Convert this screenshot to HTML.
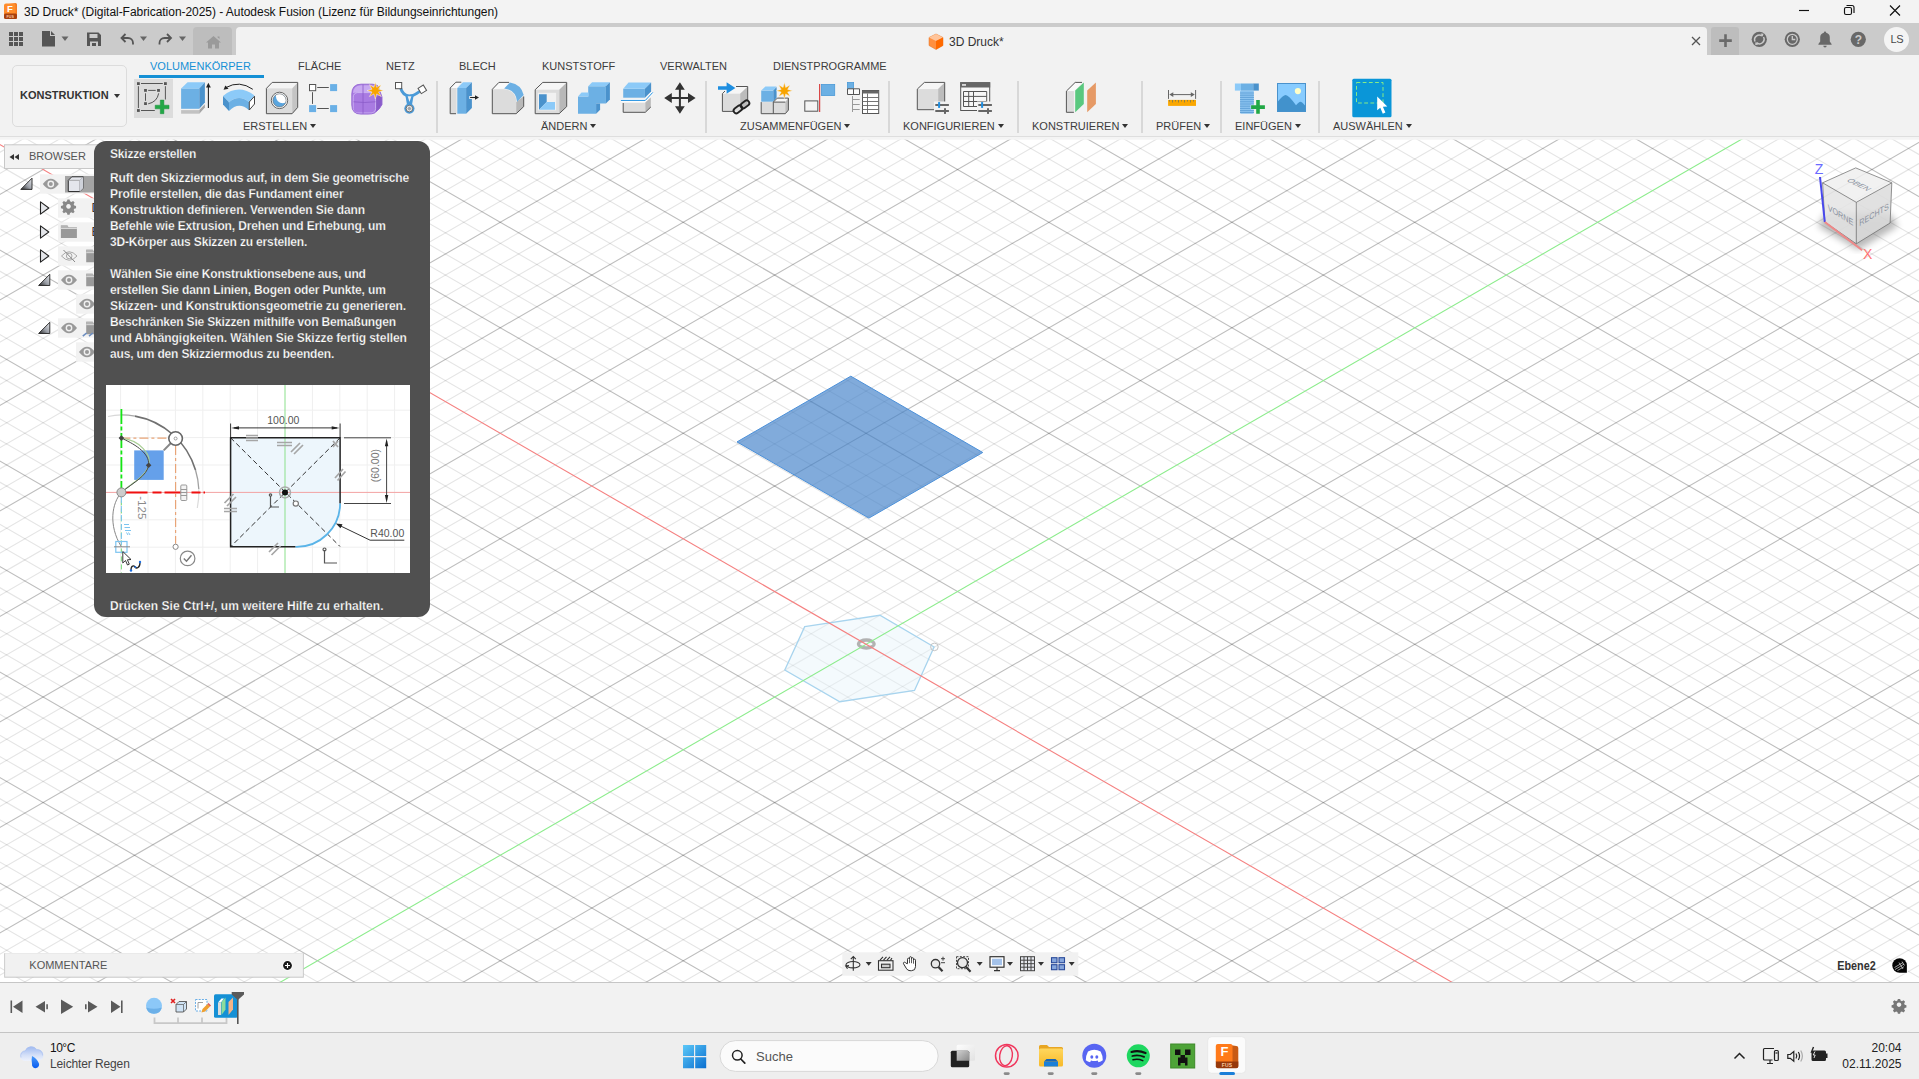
<!DOCTYPE html>
<html lang="de"><head><meta charset="utf-8"><title>3D Druck* - Autodesk Fusion</title>
<style>
*{box-sizing:border-box;margin:0;padding:0}
html,body{width:1919px;height:1079px;overflow:hidden;background:#f0f0f0;font-family:"Liberation Sans",sans-serif;color:#333}
.abs{position:absolute}
#titlebar{position:absolute;left:0;top:0;width:1919px;height:24px;background:#f3f3f3}
#titlebar .t{position:absolute;left:24px;top:5px;font-size:12px;line-height:14px;color:#111;letter-spacing:-0.04px;white-space:nowrap}
#tabrow{position:absolute;left:0;top:23px;width:1919px;height:32px;background:#cbcbcb}
#toolbar{position:absolute;left:0;top:55px;width:1919px;height:82px;background:#f2f2f2;border-bottom:1px solid #dedede}
#viewport{position:absolute;left:0;top:137px;width:1919px;height:845px;background:#fff;overflow:hidden}
#timeline{position:absolute;left:0;top:982px;width:1919px;height:50px;background:#f2f2f2;border-top:1px solid #c6c6c6}
#taskbar{position:absolute;left:0;top:1032px;width:1919px;height:47px;background:#eeeeee;border-top:1px solid #c4c4c4}
.tab{position:absolute;top:60px;font-size:11px;line-height:12px;color:#3c3c3c;white-space:nowrap}
.grp{position:absolute;top:120px;font-size:11px;line-height:12px;color:#3c3c3c;white-space:nowrap}
.grp i{display:inline-block;width:0;height:0;border-left:3px solid transparent;border-right:3px solid transparent;border-top:4px solid #333;margin-left:3px;vertical-align:2px}
.sep{position:absolute;top:81px;width:2px;height:52px;background:#d8d8d8}
.ic{position:absolute;overflow:visible}
.tt{position:absolute;left:110px;font-size:12px;font-weight:bold;line-height:16px;color:#fff;letter-spacing:-0.12px;white-space:nowrap;-webkit-text-stroke:0.25px #505050}
</style></head><body>
<div id="titlebar">
<svg class="ic" style="left:3px;top:2px" width="16" height="18" viewBox="0 0 16 18"><path d="M2.500 2.500l10-1.500a1.500 1.500 0 0 1 1.500 1.500v13a1.500 1.500 0 0 1-1.500 1.500h-8.500a2 2 0 0 1-2-2z" fill="#f47b20"/><path d="M1 3.500a2 2 0 0 1 2-2h7.500a2 2 0 0 1 2 2v11.500h-11.500z" fill="#ff8c2a"/><rect x="1" y="11.500" width="13" height="5.500" rx="1.500" fill="#a8400e"/><text x="4" y="9.800" font-family="Liberation Sans,sans-serif" font-weight="bold" font-size="9.500" fill="#fff">F</text><text x="3.600" y="15.700" font-family="Liberation Sans,sans-serif" font-weight="bold" font-size="3.600" fill="#f9c9a0">FUS</text></svg>
<div class="t">3D Druck* (Digital-Fabrication-2025) - Autodesk Fusion (Lizenz für Bildungseinrichtungen)</div>
<svg class="ic" style="left:1780px;top:0" width="139" height="24" viewBox="0 0 139 24" fill="none" stroke="#111" stroke-width="1.150"><path d="M19 10.500h10"/><rect x="64.500" y="7.500" width="7" height="7" rx="1.500"/><path d="M66.500 5.500h5.500a2 2 0 0 1 2 2v5.500"/><path d="M110 5.500l10 10M120 5.500l-10 10"/></svg>
</div>
<div id="tabrow">
<div class="abs" style="left:193px;top:4px;width:39px;height:28px;background:#bdbdbd;border-radius:4px 4px 0 0"></div>
<div class="abs" style="left:236px;top:4px;width:1471px;height:28px;background:#f2f2f2;border-radius:4px 4px 0 0"></div>
<div class="abs" style="left:1711px;top:4px;width:28px;height:28px;background:#bdbdbd;border-radius:3px 3px 0 0"></div>
<svg class="ic" style="left:0;top:0" width="240" height="32" viewBox="0 23 240 32">
 <g fill="#555"><rect x="9" y="32" width="4" height="4"/><rect x="14" y="32" width="4" height="4"/><rect x="19" y="32" width="4" height="4"/><rect x="9" y="37" width="4" height="4"/><rect x="14" y="37" width="4" height="4"/><rect x="19" y="37" width="4" height="4"/><rect x="9" y="42" width="4" height="4"/><rect x="14" y="42" width="4" height="4"/><rect x="19" y="42" width="4" height="4"/>
 <path d="M42 31h8v5h5v10.500h-13z"/><path d="M51 31l4 4h-4z"/>
 <path d="M61.500 36.500h7l-3.500 4.500z" fill="#666"/>
 <path d="M87 32.500h11.500l2.500 2.500v11h-14z M89.500 34v4h8v-4z M90 41.500v4.500h2v-3h4v3h2v-4.500z" fill-rule="evenodd"/>
 <path d="M140 36.500h7l-3.500 4.500z" fill="#666"/>
 <path d="M179 36.500h7l-3.500 4.500z" fill="#666"/>
 </g>
 <path d="M125.500 34l-4 4 4 4M121.500 38h6.500a5 5 0 0 1 5 5v1.500" fill="none" stroke="#555" stroke-width="1.800"/>
 <path d="M167 34l4 4-4 4M171 38h-6.500a5 5 0 0 0-5 5v1.500" fill="none" stroke="#555" stroke-width="1.800"/>
 <path d="M213.500 36l7.500 6.500h-2v6h-4v-4h-3v4h-4v-6h-2z M217.500 36.500h2v2.500l-2-1.700z" fill="#9a9a9a"/>
</svg>
<svg class="ic" style="left:927px;top:10px" width="18" height="18" viewBox="0 0 18 18"><path d="M9 1l7 3.500v8l-7 4-7-4v-8z" fill="#ff9040" stroke="#e07020" stroke-width=".5"/><path d="M9 1l7 3.500-7 3.500-7-3.500z" fill="#ffc49a"/><path d="M9 8l7-3.500v8l-7 4z" fill="#ff6a00"/></svg>
<div class="abs" style="left:949px;top:12px;font-size:12px;line-height:14px;color:#333;white-space:nowrap">3D Druck*</div>
<svg class="ic" style="left:1690px;top:0" width="229" height="32" viewBox="1690 23 229 32">
 <path d="M1692 37l8 8M1700 37l-8 8" stroke="#555" stroke-width="1.300" fill="none"/>
 <path d="M1725.500 34.300v12.600M1719.200 40.600h12.600" stroke="#6a6a6a" stroke-width="2.600" fill="none"/>
 <circle cx="1759.300" cy="39.300" r="7.600" fill="#686868"/><path d="M1755 41.500a4.600 4.600 0 0 1 7-5.500M1763.500 37a4.600 4.600 0 0 1-7 5.700" stroke="#cbcbcb" stroke-width="1.500" fill="none"/><path d="M1760.500 33.500l3 .3-.8 3zM1758 45l-3-.3.800-3z" fill="#cbcbcb"/>
 <circle cx="1792.300" cy="39.300" r="7.600" fill="#686868"/><circle cx="1792.300" cy="39.300" r="5" fill="none" stroke="#cbcbcb" stroke-width="1.300"/><path d="M1792.300 36v3.500h3" stroke="#cbcbcb" stroke-width="1.300" fill="none"/>
 <path d="M1825 31.500a1.200 1.200 0 0 1 1.200 1.200a4.800 4.800 0 0 1 3.600 4.800v4l1.800 2.500v.8h-13.200v-.8l1.800-2.500v-4a4.800 4.800 0 0 1 3.600-4.800a1.200 1.200 0 0 1 1.200-1.200z M1823.300 45.800h3.400a1.700 1.700 0 0 1-3.400 0z" fill="#686868"/>
 <circle cx="1858.300" cy="39.300" r="7.600" fill="#686868"/><text x="1858.300" y="43.700" text-anchor="middle" font-family="Liberation Sans,sans-serif" font-weight="bold" font-size="12" fill="#cbcbcb">?</text>
</svg>
<div class="abs" style="left:1884.400px;top:3.500px;width:25px;height:25px;border-radius:50%;background:#f4f4f4;font-size:11px;line-height:25px;text-align:center;color:#4a4a4a;letter-spacing:-0.3px">LS</div>
</div>
<div id="toolbar"></div>
<div class="abs" style="left:11.500px;top:65px;width:115.500px;height:62px;border:1.500px solid #dcdcdc;border-radius:5px;background:#f3f3f3"></div>
<div class="abs" style="left:20px;top:89px;font-size:11px;font-weight:bold;line-height:12px;color:#333;white-space:nowrap">KONSTRUKTION</div>
<div class="abs" style="left:114px;top:94px;width:0;height:0;border-left:3px solid transparent;border-right:3px solid transparent;border-top:4px solid #333"></div>
<div class="tab" style="left:150px;color:#1590d5">VOLUMENKÖRPER</div>
<div class="abs" style="left:139px;top:75px;width:125px;height:3px;background:#1590d5"></div>
<div class="tab" style="left:298px">FLÄCHE</div>
<div class="tab" style="left:386px">NETZ</div>
<div class="tab" style="left:459px">BLECH</div>
<div class="tab" style="left:542px">KUNSTSTOFF</div>
<div class="tab" style="left:660px">VERWALTEN</div>
<div class="tab" style="left:773px">DIENSTPROGRAMME</div>
<div class="abs" style="left:133.500px;top:79px;width:39px;height:38.500px;background:#dcdcdc"></div>
<svg class="ic" style="left:0;top:55px" width="1919" height="82" viewBox="0 55 1919 82"><!-- sketch -->
<g fill="#555"><rect x="137" y="82.200" width="2.800" height="2.800"/><rect x="164" y="82.200" width="2.800" height="2.800"/><rect x="137" y="109.100" width="2.800" height="2.800"/><rect x="144.100" y="89" width="2.800" height="2.800"/><rect x="157.100" y="89" width="2.800" height="2.800"/><rect x="144.100" y="102.200" width="2.800" height="2.800"/></g>
<path d="M141 83.500H162.800M138.400 86.200V108M165.400 86.200V99.500M141 110.500H154.800M148.200 90.400H155.700M145.500 93.300V100.800M158.700 93.300A13.200 13.200 0 0 1 148.200 103.800" fill="none" stroke="#555" stroke-width="1"/>
<path d="M160.300 100.100h3.600v5.100h5.100v3.600h-5.100v4.900h-3.600v-4.900h-5.100v-3.600h5.100z" fill="#22a846" stroke="#1d8f3c" stroke-width=".5"/>
<!-- extrude -->
<path d="M181.100 88.400H199.300V108.800H181.100z" fill="#6cb0e4"/><path d="M181.100 88.400L187.600 82.200H204.900L199.300 88.400z" fill="#8ccaf8"/><path d="M199.300 88.400L204.900 82.200V102.600L199.300 108.800z" fill="#4a92cc"/>
<path d="M181.100 110.100H199.300V113.700H181.100z" fill="#c2c2c2"/><path d="M199.300 110.100L204.900 104.300V107.400L199.300 113.700z" fill="#a6a6a6"/>
<path d="M208.400 86V107.900" stroke="#222" stroke-width="1.100" fill="none"/><path d="M208.400 82.800L210.800 87.400H206z" fill="#222"/>
<!-- revolve -->
<path d="M223 96Q238.500 83.500 254.500 95.500L249 102Q239 94 229 102.200z" fill="#8ccaf8"/>
<path d="M229 102.200Q239 94 249 102V110.300Q239 101 229 111z" fill="#6cb0e4"/>
<path d="M223 96L229 102.200V111L223 104.500z" fill="#4a92cc"/>
<path d="M249.300 102L254.500 96.200V104L249.300 110z" fill="#fff" stroke="#444" stroke-width="1"/>
<path d="M252.800 89.300Q239.500 80 226 87.500" fill="none" stroke="#222" stroke-width="1"/><path d="M223.600 89.800L225.300 85.500L228.600 88.800z" fill="#222"/>
<!-- hole -->
<path d="M266.400 88.400L272.200 82.400H297.700L292.100 88.400z" fill="#f4f4f4"/><path d="M292.100 88.400L297.700 82.400V107.400L292.100 113.700z" fill="#c4c4c4"/><path d="M266.400 88.400H292.100V113.700H266.400z" fill="#dcdcdc"/>
<path d="M266.400 88.400L272.200 82.400H297.700V107.400L292.100 113.700H266.400z" fill="none" stroke="#555" stroke-width="1"/>
<circle cx="279.500" cy="100.400" r="8.200" fill="#fff" stroke="#555" stroke-width=".9"/>
<clipPath id="hc"><circle cx="279.500" cy="100.400" r="6.600"/></clipPath><circle cx="279.500" cy="100.400" r="6.600" fill="#5aa5de"/><circle cx="282.800" cy="96.300" r="6.900" fill="#fff" clip-path="url(#hc)"/><circle cx="279.500" cy="100.400" r="6.600" fill="none" stroke="#666" stroke-width=".6"/>
<!-- rect pattern -->
<rect x="309.500" y="84.500" width="6.200" height="6.200" fill="#fff" stroke="#555"/>
<rect x="330.100" y="84.100" width="7" height="7" fill="#6ab0e6"/><rect x="309.100" y="105.100" width="7" height="7" fill="#6ab0e6"/><rect x="330.100" y="105.100" width="7" height="7" fill="#6ab0e6"/>
<path d="M317.200 87.500H328.800M312.500 92.200V103.900M317.200 108.500H328.800" stroke="#555" stroke-width="1" fill="none"/>
<!-- form -->
<path d="M351.800 94Q351.800 84.200 361 84.200H372Q376 84.200 378 86L382 97V104.500Q380 109 374.500 113Q372 114.100 368 114.100H361Q351.800 114.100 351.800 105z" fill="#a97be2"/>
<path d="M353 93Q353.500 85.500 361 85.300H372Q375.500 85.500 377 87.500L380 95.500Q377 92.400 372 92.400H357Q354 92.400 353 93z" fill="#c8a9f1"/>
<path d="M375.800 97Q380 95 382 97.500V104.500Q380 109 375.800 112z" fill="#8a5cc9"/>
<rect x="353.200" y="92.600" width="22.400" height="20.400" rx="4.500" fill="none" stroke="#cdb6f3" stroke-width=".9"/>
<path d="M351.800 94Q351.800 84.200 361 84.200H372Q376 84.200 378 86L382 97V104.500Q380 109 374.500 113Q372 114.100 368 114.100H361Q351.800 114.100 351.800 105z" fill="none" stroke="#9466d2" stroke-width=".9"/>
<path d="M363 84.500V113.800M353.500 101.800Q364 103.200 375.500 101.800M379 96V108" fill="none" stroke="#8a5cc9" stroke-width=".8"/>
<path d="M375.300 82.300l1.400 5 4.500-2.600-2.600 4.500 5 1.400-5 1.400 2.600 4.500-4.500-2.600-1.400 5-1.400-5-4.500 2.600 2.600-4.500-5-1.400 5-1.400-2.600-4.500 4.500 2.600z" fill="#f8a400" stroke="#f4f4f4" stroke-width=".5"/>
<!-- automated -->
<g fill="none" stroke="#4a9ad8" stroke-width="2.800" stroke-linecap="round"><path d="M400.800 88.500Q402.500 94.500 408.500 96"/><path d="M419 91.800Q414 95.500 410.500 96"/></g>
<path d="M405.200 94.500H413.800L411.800 106H407.200z" fill="#4a9ad8"/>
<path d="M407.700 96.300H411.400L409.500 102z" fill="#f1f1f1"/>
<circle cx="409.400" cy="108.600" r="5.100" fill="#4a9ad8"/><circle cx="409.400" cy="108.600" r="3.300" fill="#f1f1f1" stroke="#666" stroke-width=".9"/><circle cx="409.400" cy="108.600" r="1.300" fill="none" stroke="#777" stroke-width=".6"/><path d="M409.400 106.800v3.600M407.600 108.600h3.600" stroke="#888" stroke-width=".5"/>
<rect x="395.500" y="82.500" width="6.200" height="6.200" fill="#fff" stroke="#555"/>
<rect x="419.200" y="86.200" width="6.200" height="6.200" fill="#fff" stroke="#555" transform="rotate(-32 422.300 89.300)"/>
<!-- presspull -->
<path d="M450.200 88L455.900 82.200H461.300L457 88z" fill="#fafafa"/><path d="M450.200 88H456.500V113.700H450.200z" fill="#dcdcdc"/>
<path d="M456 113.700H450.200V88L455.900 82.200H461.300" fill="none" stroke="#555" stroke-width="1"/>
<path d="M457.300 88H466.100V113.700H457.300z" fill="#6cb0e4"/><path d="M457.300 88L463 82.200H471.900L466.100 88z" fill="#8ccaf8"/><path d="M466.100 88L471.900 82.200V107.900L466.100 113.700z" fill="#4a92cc"/>
<rect x="469.300" y="96" width="6" height="3" fill="#f4f4f4"/><path d="M470.100 97.500H476" stroke="#222" stroke-width="1.100"/><path d="M479 97.500L475 95.200V99.800z" fill="#222"/>
<!-- fillet -->
<path d="M492.300 89.300L498.900 82.400H509.100L504.200 88.400z" fill="#fafafa"/>
<path d="M492.300 89.300H504Q516.200 90.500 516.200 102.100V113.700H492.300z" fill="#dcdcdc"/>
<path d="M516.200 102.100L523.700 96.200V106.600L516.200 113.700z" fill="#b8b8b8"/>
<path d="M504.200 88.400L510 82.400Q521.500 84.500 523.700 95L517.100 101.700Q516 90 504.200 88.400z" fill="#6cb0e4"/>
<path d="M509.100 82.400H498.900L492.300 89.300V113.700H516.200L523.700 106.600V96.500" fill="none" stroke="#555" stroke-width="1"/>
<!-- shell -->
<path d="M535.200 89.700L542.800 82.400H566.700L559.200 89.700z" fill="#f6f6f6"/><path d="M559.200 89.700L566.700 82.400V106.600L559.200 113.700z" fill="#b8b8b8"/><path d="M535.200 89.700H559.200V113.700H535.200z" fill="#dcdcdc"/>
<path d="M535.200 89.700L542.800 82.400H566.700V106.600L559.200 113.700H535.200z" fill="none" stroke="#555" stroke-width="1"/>
<rect x="537.900" y="92.800" width="18.200" height="17.600" fill="#f1f1f1"/>
<path d="M539 94.200H546.700V102.100L539 109.700z" fill="#4a92cc"/><path d="M546.700 102.100H555V109.700H539z" fill="#8ccaf8"/>
<!-- combine -->
<path d="M578 96.400H588.200V86.200H605.900V103.500H596.100V113.700H578z" fill="#6cb0e4"/>
<path d="M578 96.400L581.500 92.400H588.600V96.400z" fill="#8ccaf8"/><path d="M588.200 86.200L592.100 82.200H609.900L605.900 86.200z" fill="#8ccaf8"/>
<path d="M605.900 86.200L609.900 82.200V99.500L605.900 103.500z" fill="#4a92cc"/><path d="M596.100 103.500H600.100V109.700L596.100 113.700z" fill="#4a92cc"/>
<!-- split -->
<path d="M623.200 88.800H644.900V97.700H623.200z" fill="#6cb0e4"/><path d="M623.200 88.800L628.500 82.400H651.100L644.900 88.800z" fill="#8ccaf8"/><path d="M644.900 88.800L651.100 82.400V91.500L644.900 97.700z" fill="#4a92cc"/>
<path d="M620.900 100.400H645.300L652.800 92.400" fill="none" stroke="#fff" stroke-width="2.600"/><path d="M620.900 100.400H645.300L652.800 92.400" fill="none" stroke="#1e8ee0" stroke-width="1"/>
<path d="M623.200 103H645.300V112.300H623.200z" fill="#dcdcdc"/><path d="M645.300 102.600L650.800 97.500V107L645.300 112.300z" fill="#b8b8b8"/>
<path d="M623.200 103V112.300H645.300L650.800 107" fill="none" stroke="#555" stroke-width="1"/>
<!-- move -->
<path d="M679.900 88V108M670 98H690" stroke="#333" stroke-width="2" fill="none"/>
<path d="M679.900 82.200L684.800 89.800H675zM679.900 113.800L684.800 106.200H675zM664.200 98L671.800 93.100V102.900zM695.600 98L688 93.100V102.900z" fill="#333"/>
<!-- derive -->
<path d="M722.400 93.700L729 86.500H747.700L740.100 93.700z" fill="#f6f6f6"/><path d="M740.100 93.700L747.700 86.500V104.300L740.100 111.400z" fill="#bcbcbc"/><path d="M722.400 93.700H740.100V111.400H722.400z" fill="#dcdcdc"/>
<path d="M736 86.500H747.700V101M733 111.400H722.400V93.700L725 91" fill="none" stroke="#555" stroke-width="1"/>
<path d="M718 86.200H726.600V82.200L735.400 88L726.600 93.800V89.800H718z" fill="#1e8ee0"/>
<g fill="none" stroke="#222" stroke-width="1.900"><rect x="733.200" y="106.700" width="9.500" height="5.400" rx="2.700" transform="rotate(-37 738 109.400)"/><rect x="740.200" y="101.600" width="9.500" height="5.400" rx="2.700" transform="rotate(-37 745 104.300)"/></g>
<!-- new component -->
<path d="M761.200 90.600H773.300V101.700H761.200z" fill="#6cb0e4"/><path d="M761.200 90.600L765.400 86.500H776.600L773.300 90.600z" fill="#8ccaf8"/><path d="M773.300 90.600L776.600 87.100V97.700L773.300 101.700z" fill="#4a92cc"/>
<path d="M761.200 102.100H785.300V113.700H761.200z" fill="#dcdcdc"/><path d="M773.300 102.100L777.300 98.100H788.400L785.300 102.100z" fill="#f6f6f6"/><path d="M785.300 102.100L788.400 98.100V110.100L785.300 113.700z" fill="#bcbcbc"/>
<path d="M761.200 102.100V113.700H785.300L788.400 110.100V98.100H777.300L773.300 102.100V113.700M773.300 102.100H785.300" fill="none" stroke="#555" stroke-width="1"/>
<path d="M784.400 82.600l1.300 4.900 4.400-2.500-2.500 4.400 4.900 1.300-4.900 1.300 2.500 4.400-4.400-2.500-1.300 4.900-1.300-4.900-4.400 2.500 2.500-4.400-4.900-1.300 4.900-1.300-2.500-4.400 4.400 2.500z" fill="#f8a400" stroke="#f4f4f4" stroke-width=".4"/>
<!-- joint -->
<rect x="804.800" y="100.900" width="13" height="10.300" fill="#f4f4f4" stroke="#555" stroke-width="1"/>
<path d="M819.700 84V112" stroke="#d42020" stroke-width="1"/>
<rect x="821.500" y="84.500" width="13.200" height="11" fill="#6cb0e4" stroke="#4a9ad8" stroke-width=".8"/>
<!-- table -->
<rect x="847.400" y="82.500" width="6.200" height="6" fill="#6cb0e4" stroke="#4a9ad8" stroke-width=".8"/>
<path d="M847.500 88.800H859.500V94.500H847.500zM853.500 88.800V94.500" fill="#fafafa" stroke="#555" stroke-width="1"/>
<path d="M852.500 96V112M852.500 99.500H859.700M852.500 104.500H859.700M852.500 109.500H859.700" fill="none" stroke="#999" stroke-width="1"/>
<rect x="862.500" y="90.500" width="16.200" height="23" fill="#fff" stroke="#555" stroke-width="1"/><rect x="862.500" y="90.500" width="16.200" height="3" fill="#666"/>
<path d="M867.500 93.500V113.500M862.500 97.500H878.700M862.500 101.500H878.700M862.500 105.500H878.700M862.500 109.500H878.700" fill="none" stroke="#666" stroke-width=".9"/>
<!-- config1 -->
<path d="M917.300 89.100L924.400 82.400H944.700L938.100 89.100z" fill="#f6f6f6"/><path d="M938.100 89.100L944.700 82.400V102.600L938.100 109.700z" fill="#bcbcbc"/><path d="M917.300 89.100H938.100V109.700H917.300z" fill="#dcdcdc"/>
<path d="M934 109.700H917.300V89.100L924.400 82.400H944.700V102" fill="none" stroke="#555" stroke-width="1"/>
<g id="sld"><rect x="934" y="101.500" width="16" height="13" fill="#f1f1f1"/><path d="M935.300 105H948.900M935.300 111H948.900" stroke="#666" stroke-width="1.800"/><rect x="938.100" y="102.100" width="2" height="5.800" fill="#1e8ee0"/><rect x="944" y="108.200" width="2" height="5.700" fill="#666"/></g>
<!-- config2 -->
<rect x="960.700" y="82.700" width="29" height="27.800" fill="#f6f6f6" stroke="#555" stroke-width="1"/><rect x="960.200" y="82.200" width="30" height="5.300" fill="#666"/><rect x="962" y="84.200" width="4" height="1.500" fill="#f4f4f4"/>
<path d="M963.500 91.500H986.700V106.500H963.500zM968.700 91.500V106.500M973.500 91.500V106.500M963.500 96.400H986.700M963.500 101.500H986.700" fill="none" stroke="#555" stroke-width="1"/>
<g transform="translate(43 0)"><rect x="934" y="101.500" width="16" height="13" fill="#f1f1f1"/><path d="M935.300 105H948.900M935.300 111H948.900" stroke="#666" stroke-width="1.800"/><rect x="938.100" y="102.100" width="2" height="5.800" fill="#1e8ee0"/><rect x="944" y="108.200" width="2" height="5.700" fill="#666"/></g>
<!-- construct -->
<path d="M1066.400 91.100L1075.200 82.400H1082.300L1073.900 91.100z" fill="#fafafa"/><path d="M1066.400 91.100H1073.900V112.300H1066.400z" fill="#dcdcdc"/>
<path d="M1073.900 112.300H1066.400V91.100L1075.200 82.400H1082" fill="none" stroke="#555" stroke-width="1"/>
<path d="M1075.200 90.600L1083.800 82.400V103.900L1075.200 112.300z" fill="#5ac87f"/><path d="M1087.200 90.600L1095.900 82.400V103.900L1087.200 112.300z" fill="#e69a66"/>
<!-- measure -->
<rect x="1168.100" y="99.900" width="27.900" height="6" fill="#faa700"/>
<path d="M1169.500 100V101.500M1172.500 100V102.500M1175.500 100V101.500M1178.500 100V102.500M1181.500 100V101.500M1184.500 100V102.500M1187.500 100V101.500M1190.500 100V102.500M1193.500 100V101.500" stroke="#775" stroke-width=".8"/>
<path d="M1168.500 90V98.900M1195.600 90V98.900M1171 94.600H1193" stroke="#666" stroke-width="1" fill="none"/><path d="M1169.300 94.600L1173.300 92.300V96.900zM1194.800 94.600L1190.800 92.300V96.900z" fill="#666"/>
<!-- bolt -->
<rect x="1240.100" y="90.600" width="13.700" height="23.100" rx="1" fill="#8cc4f0"/>
<path d="M1240 93H1254M1240 95.200H1254M1240 97.400H1254M1240 99.600H1254M1240 101.800H1254M1240 104H1254M1240 106.200H1254M1240 108.400H1254M1240 110.600H1254M1240 112.500H1254" stroke="#5e9fd6" stroke-width=".9"/>
<rect x="1234.900" y="83.500" width="6.200" height="7.100" fill="#8ccaf8"/><rect x="1241" y="83.500" width="12.400" height="7.100" fill="#6cb0e4"/><rect x="1253.300" y="83.500" width="5.500" height="7.100" fill="#4a92cc"/>
<path d="M1256.200 100.100h3.600v5.100h5.100v3.800h-5.100v4.700h-3.600v-4.700h-5.100v-3.800h5.100z" fill="#22a846" stroke="#f1f1f1" stroke-width=".8" paint-order="stroke"/>
<!-- image -->
<rect x="1277.500" y="83.500" width="28" height="28" fill="#88ccff" stroke="#4a92cc" stroke-width="1"/>
<path d="M1277.500 102Q1283 95 1285.700 95Q1288.500 95 1296 105.200Q1299 101.700 1300.300 101.700Q1302 101.700 1305.500 106.100V111.500H1277.500z" fill="#4292cc"/>
<circle cx="1297.900" cy="91.100" r="3.100" fill="#ffffc8"/>
<!-- select -->
<rect x="1352.300" y="78.700" width="39.200" height="38.600" rx="1.500" fill="#0a96d8"/>
<rect x="1356.500" y="82.500" width="26.500" height="20.500" fill="none" stroke="#86ec86" stroke-width="1" stroke-dasharray="3.800 2.400"/>
<path d="M1377.200 96.400V110.300L1380.300 107.800L1382.800 113.800L1385.400 112.600L1382.900 106.800L1387.300 106.500z" fill="#fff"/>
</svg>
<div class="sep" style="left:436px"></div><div class="sep" style="left:705px"></div><div class="sep" style="left:888px"></div><div class="sep" style="left:1017px"></div><div class="sep" style="left:1141px"></div><div class="sep" style="left:1220px"></div><div class="sep" style="left:1318px"></div>
<div class="grp" style="left:243px">ERSTELLEN<i></i></div>
<div class="grp" style="left:541px">ÄNDERN<i></i></div>
<div class="grp" style="left:740px">ZUSAMMENFÜGEN<i></i></div>
<div class="grp" style="left:903px">KONFIGURIEREN<i></i></div>
<div class="grp" style="left:1032px">KONSTRUIEREN<i></i></div>
<div class="grp" style="left:1156px">PRÜFEN<i></i></div>
<div class="grp" style="left:1235px">EINFÜGEN<i></i></div>
<div class="grp" style="left:1333px">AUSWÄHLEN<i></i></div>
<div id="viewport"><svg class="grid" width="1919" height="845" viewBox="0 0 1919 845" style="position:absolute;left:0;top:0"><path d="M-10.0 -0.09L1929.0 -1118.67M-10.0 21.01L1929.0 -1097.57M-10.0 42.11L1929.0 -1076.47M-10.0 84.31L1929.0 -1034.27M-10.0 105.41L1929.0 -1013.17M-10.0 126.51L1929.0 -992.07M-10.0 147.61L1929.0 -970.97M-10.0 189.81L1929.0 -928.77M-10.0 210.91L1929.0 -907.67M-10.0 232.01L1929.0 -886.57M-10.0 253.11L1929.0 -865.47M-10.0 295.31L1929.0 -823.27M-10.0 316.41L1929.0 -802.17M-10.0 337.51L1929.0 -781.07M-10.0 358.61L1929.0 -759.97M-10.0 400.81L1929.0 -717.77M-10.0 421.91L1929.0 -696.67M-10.0 443.01L1929.0 -675.57M-10.0 464.11L1929.0 -654.47M-10.0 506.31L1929.0 -612.27M-10.0 527.41L1929.0 -591.17M-10.0 548.51L1929.0 -570.07M-10.0 569.61L1929.0 -548.97M-10.0 611.81L1929.0 -506.77M-10.0 632.91L1929.0 -485.67M-10.0 654.01L1929.0 -464.57M-10.0 675.11L1929.0 -443.47M-10.0 717.31L1929.0 -401.27M-10.0 738.41L1929.0 -380.17M-10.0 759.51L1929.0 -359.07M-10.0 780.61L1929.0 -337.97M-10.0 822.81L1929.0 -295.77M-10.0 843.91L1929.0 -274.67M-10.0 865.01L1929.0 -253.57M-10.0 886.11L1929.0 -232.47M-10.0 928.31L1929.0 -190.27M-10.0 949.41L1929.0 -169.17M-10.0 970.51L1929.0 -148.07M-10.0 991.61L1929.0 -126.97M-10.0 1033.81L1929.0 -84.77M-10.0 1054.91L1929.0 -63.67M-10.0 1076.01L1929.0 -42.57M-10.0 1097.11L1929.0 -21.47M-10.0 1139.31L1929.0 20.73M-10.0 1160.41L1929.0 41.83M-10.0 1181.51L1929.0 62.93M-10.0 1202.61L1929.0 84.03M-10.0 1244.81L1929.0 126.23M-10.0 1265.91L1929.0 147.33M-10.0 1287.01L1929.0 168.43M-10.0 1308.11L1929.0 189.53M-10.0 1350.31L1929.0 231.73M-10.0 1371.41L1929.0 252.83M-10.0 1392.51L1929.0 273.93M-10.0 1413.61L1929.0 295.03M-10.0 1455.81L1929.0 337.23M-10.0 1476.91L1929.0 358.33M-10.0 1498.01L1929.0 379.43M-10.0 1519.11L1929.0 400.53M-10.0 1561.31L1929.0 442.73M-10.0 1582.41L1929.0 463.83M-10.0 1603.51L1929.0 484.93M-10.0 1624.61L1929.0 506.03M-10.0 1666.81L1929.0 548.23M-10.0 1687.91L1929.0 569.33M-10.0 1709.01L1929.0 590.43M-10.0 1730.11L1929.0 611.53M-10.0 1772.31L1929.0 653.73M-10.0 1793.41L1929.0 674.83M-10.0 1814.51L1929.0 695.93M-10.0 1835.61L1929.0 717.03M-10.0 1877.81L1929.0 759.23M-10.0 1898.91L1929.0 780.33M-10.0 1920.01L1929.0 801.43M-10.0 1941.11L1929.0 822.53" stroke="#000" stroke-opacity=".105" stroke-width="1.1" fill="none"/><path d="M-10.0 824.79L1929.0 1943.37M-10.0 803.69L1929.0 1922.27M-10.0 782.59L1929.0 1901.17M-10.0 761.49L1929.0 1880.07M-10.0 719.29L1929.0 1837.87M-10.0 698.19L1929.0 1816.77M-10.0 677.09L1929.0 1795.67M-10.0 655.99L1929.0 1774.57M-10.0 613.79L1929.0 1732.37M-10.0 592.69L1929.0 1711.27M-10.0 571.59L1929.0 1690.17M-10.0 550.49L1929.0 1669.07M-10.0 508.29L1929.0 1626.87M-10.0 487.19L1929.0 1605.77M-10.0 466.09L1929.0 1584.67M-10.0 444.99L1929.0 1563.57M-10.0 402.79L1929.0 1521.37M-10.0 381.69L1929.0 1500.27M-10.0 360.59L1929.0 1479.17M-10.0 339.49L1929.0 1458.07M-10.0 297.29L1929.0 1415.87M-10.0 276.19L1929.0 1394.77M-10.0 255.09L1929.0 1373.67M-10.0 233.99L1929.0 1352.57M-10.0 191.79L1929.0 1310.37M-10.0 170.69L1929.0 1289.27M-10.0 149.59L1929.0 1268.17M-10.0 128.49L1929.0 1247.07M-10.0 86.29L1929.0 1204.87M-10.0 65.19L1929.0 1183.77M-10.0 44.09L1929.0 1162.67M-10.0 22.99L1929.0 1141.57M-10.0 -19.21L1929.0 1099.37M-10.0 -40.31L1929.0 1078.27M-10.0 -61.41L1929.0 1057.17M-10.0 -82.51L1929.0 1036.07M-10.0 -124.71L1929.0 993.87M-10.0 -145.81L1929.0 972.77M-10.0 -166.91L1929.0 951.67M-10.0 -188.01L1929.0 930.57M-10.0 -230.21L1929.0 888.37M-10.0 -251.31L1929.0 867.27M-10.0 -272.41L1929.0 846.17M-10.0 -293.51L1929.0 825.07M-10.0 -335.71L1929.0 782.87M-10.0 -356.81L1929.0 761.77M-10.0 -377.91L1929.0 740.67M-10.0 -399.01L1929.0 719.57M-10.0 -441.21L1929.0 677.37M-10.0 -462.31L1929.0 656.27M-10.0 -483.41L1929.0 635.17M-10.0 -504.51L1929.0 614.07M-10.0 -546.71L1929.0 571.87M-10.0 -567.81L1929.0 550.77M-10.0 -588.91L1929.0 529.67M-10.0 -610.01L1929.0 508.57M-10.0 -652.21L1929.0 466.37M-10.0 -673.31L1929.0 445.27M-10.0 -694.41L1929.0 424.17M-10.0 -715.51L1929.0 403.07M-10.0 -757.71L1929.0 360.87M-10.0 -778.81L1929.0 339.77M-10.0 -799.91L1929.0 318.67M-10.0 -821.01L1929.0 297.57M-10.0 -863.21L1929.0 255.37M-10.0 -884.31L1929.0 234.27M-10.0 -905.41L1929.0 213.17M-10.0 -926.51L1929.0 192.07M-10.0 -968.71L1929.0 149.87M-10.0 -989.81L1929.0 128.77M-10.0 -1010.91L1929.0 107.67M-10.0 -1032.01L1929.0 86.57M-10.0 -1074.21L1929.0 44.37M-10.0 -1095.31L1929.0 23.27M-10.0 -1116.41L1929.0 2.17" stroke="#000" stroke-opacity=".105" stroke-width="1.1" fill="none"/><path d="M-10.0 63.21L1929.0 -1055.37M-10.0 168.71L1929.0 -949.87M-10.0 274.21L1929.0 -844.37M-10.0 379.71L1929.0 -738.87M-10.0 485.21L1929.0 -633.37M-10.0 590.71L1929.0 -527.87M-10.0 696.21L1929.0 -422.37M-10.0 801.71L1929.0 -316.87M-10.0 907.21L1929.0 -211.37M-10.0 1118.21L1929.0 -0.37M-10.0 1223.71L1929.0 105.13M-10.0 1329.21L1929.0 210.63M-10.0 1434.71L1929.0 316.13M-10.0 1540.21L1929.0 421.63M-10.0 1645.71L1929.0 527.13M-10.0 1751.21L1929.0 632.63M-10.0 1856.71L1929.0 738.13M-10.0 1962.21L1929.0 843.63" stroke="#000" stroke-opacity=".26" stroke-width="1.1" fill="none"/><path d="M-10.0 845.89L1929.0 1964.47M-10.0 740.39L1929.0 1858.97M-10.0 634.89L1929.0 1753.47M-10.0 529.39L1929.0 1647.97M-10.0 423.89L1929.0 1542.47M-10.0 318.39L1929.0 1436.97M-10.0 212.89L1929.0 1331.47M-10.0 107.39L1929.0 1225.97M-10.0 -103.61L1929.0 1014.97M-10.0 -209.11L1929.0 909.47M-10.0 -314.61L1929.0 803.97M-10.0 -420.11L1929.0 698.47M-10.0 -525.61L1929.0 592.97M-10.0 -631.11L1929.0 487.47M-10.0 -736.61L1929.0 381.97M-10.0 -842.11L1929.0 276.47M-10.0 -947.61L1929.0 170.97M-10.0 -1053.11L1929.0 65.47" stroke="#000" stroke-opacity=".26" stroke-width="1.1" fill="none"/><polygon points="850.8,239.2 982.7,315.5 868.9,381.1 737.0,304.9" fill="#3f80c8" fill-opacity="0.66" stroke="#4a8fd8" stroke-width="1"/>
<polygon points="804.7,489.7 879.9,478.3 934.1,509.9 914.5,553.5 839.8,564.7 784.8,533.1" fill="#e6f3fa" fill-opacity="0.45" stroke="#a8d4ee" stroke-width="1.300"/>
<ellipse cx="866.300" cy="507" rx="7.900" ry="4" fill="none" stroke="#b2b2b2" stroke-width="3.300"/><path d="M-10.0 1012.71L1929.0 -105.87" stroke="#8cec8c" stroke-width="1.1" fill="none"/><path d="M-10.0 1.89L1929.0 1120.47" stroke="#f58080" stroke-width="1.1" fill="none"/>
<circle cx="934.400" cy="509.9" r="3.800" fill="none" stroke="#c4c4c4" stroke-width="1"/>
</svg><svg class="ic" style="left:0;top:0" width="1919" height="845" viewBox="0 137 1919 845">
<defs>
<linearGradient id="tg" x1="0" y1="1" x2="1" y2="0"><stop offset="0" stop-color="#222"/><stop offset=".45" stop-color="#9a9ea6"/><stop offset="1" stop-color="#e8eaee"/></linearGradient>
<g id="eye"><path d="M0 0Q8 -10.600 16 0Q8 10.600 0 0z" fill="#999"/><circle cx="8" cy="0" r="3.400" fill="#f0f0f0"/><circle cx="8" cy="0" r="2" fill="#999"/></g>
<g id="tri"><path d="M0 .400L8.300 6.500L0 12.600z" fill="#e4e6ea" stroke="#222" stroke-width="1.100" stroke-linejoin="round"/></g>
<g id="trx"><path d="M0 11.200H11.200V0z" fill="url(#tg)" stroke="#222" stroke-width=".9" stroke-linejoin="round"/></g>
<g id="fld"><path d="M0 0H6.500L7.700 2H16V12.600H0z" fill="#999"/><path d="M0 0H6.500L7.700 2H16V3.400H0z" fill="#b4b4b4"/><path d="M0 3H16" stroke="#e8e8e8" stroke-width=".7"/></g>
<filter id="blur"><feGaussianBlur stdDeviation="3.500"/></filter>
</defs>
<rect x="0" y="137" width="1919" height="2.700" fill="#f4f4f4"/>
<!-- browser header -->
<rect x="4.500" y="144.800" width="299" height="23.700" fill="#f2f2f2" stroke="#c8c8c8" stroke-width="1"/>
<path d="M9.500 157L14 154V160zM14.500 157L19 154V160z" fill="#333"/>
<text x="29" y="160" font-family="Liberation Sans,sans-serif" font-size="11" fill="#555">BROWSER</text>
<!-- rows -->
<g fill="#f2f2f2"><rect x="40" y="174.300" width="60" height="19.400"/><rect x="58" y="198.300" width="42" height="19.400"/><rect x="58" y="222.300" width="42" height="19.400"/><rect x="58" y="246.300" width="42" height="19.400"/><rect x="58" y="270.300" width="42" height="19.400"/><rect x="76" y="294.300" width="30" height="19.400"/><rect x="58" y="318.300" width="42" height="19.400"/><rect x="76" y="342.300" width="30" height="19.400"/></g>
<g transform="translate(20.800 178.200)"><path d="M0 11.200H11.200V0z" fill="url(#tg)" stroke="#222" stroke-width=".9" stroke-linejoin="round"/></g>
<g transform="translate(42.800 184)"><path d="M0 0Q8 -10.600 16 0Q8 10.600 0 0z" fill="#999"/><circle cx="8" cy="0" r="3.400" fill="#f0f0f0"/><circle cx="8" cy="0" r="2" fill="#999"/></g>
<rect x="65" y="176" width="40" height="16.500" fill="#a4a4a4"/>
<path d="M68.300 180.300L71.800 176.800H83.300V188L79.800 191.500H68.300z" fill="#e4e6ec" stroke="#222" stroke-width=".9" stroke-linejoin="round"/><path d="M79.800 180.300V191.500M68.300 180.300H79.800L83.300 176.800" fill="none" stroke="#777" stroke-width=".6"/><path d="M79.800 180.300L83.300 176.800V188L79.800 191.500z" fill="#cfd2da"/>
<g transform="translate(40.500 201.500)"><path d="M0 .400L8.300 6.500L0 12.600z" fill="#e4e6ea" stroke="#222" stroke-width="1.100" stroke-linejoin="round"/></g>
<g transform="translate(68.500 207.400) scale(.9) translate(-68.600 -209.200)"><path d="M68.500 200.500l1.300 0 .5 2 1.600 .7 1.800-1.100 1.700 1.700-1.100 1.800 .7 1.600 2 .5v2.400l-2 .5-.7 1.600 1.100 1.800-1.700 1.700-1.800-1.100-1.600 .7-.5 2h-2.400l-.5-2-1.600-.7-1.800 1.100-1.700-1.700 1.100-1.800-.7-1.600-2-.5v-2.400l2-.5 .7-1.600-1.100-1.800 1.700-1.700 1.800 1.100 1.600-.7 .5-2z M68.600 205.400a2.600 2.600 0 1 0 .01 0z" fill="#888" fill-rule="evenodd"/></g>
<g transform="translate(40.500 225.500)"><path d="M0 .400L8.300 6.500L0 12.600z" fill="#e4e6ea" stroke="#222" stroke-width="1.100" stroke-linejoin="round"/></g>
<g transform="translate(60.900 225.500)"><path d="M0 0H6.500L7.700 2H16V12.600H0z" fill="#999"/><path d="M0 0H6.500L7.700 2H16V3.400H0z" fill="#b4b4b4"/><path d="M0 3H16" stroke="#e8e8e8" stroke-width=".7"/></g>
<g transform="translate(40.500 249.500)"><path d="M0 .400L8.300 6.500L0 12.600z" fill="#e4e6ea" stroke="#222" stroke-width="1.100" stroke-linejoin="round"/></g>
<g fill="none" stroke="#aaa" stroke-width="1"><path d="M61.500 256Q69.200 247.500 77 256Q69.200 264.500 61.500 256z"/><circle cx="69.200" cy="256" r="2.800"/><path d="M63.500 250L75 262" stroke="#888"/></g>
<g transform="translate(86.200 249.7)"><path d="M0 0H6.500L7.700 2H16V12.600H0z" fill="#999"/><path d="M0 0H6.500L7.700 2H16V3.400H0z" fill="#b4b4b4"/><path d="M0 3H16" stroke="#e8e8e8" stroke-width=".7"/></g>
<g transform="translate(38.600 274.300)"><path d="M0 11.200H11.200V0z" fill="url(#tg)" stroke="#222" stroke-width=".9" stroke-linejoin="round"/></g>
<g transform="translate(61 280)"><path d="M0 0Q8 -10.600 16 0Q8 10.600 0 0z" fill="#999"/><circle cx="8" cy="0" r="3.400" fill="#f0f0f0"/><circle cx="8" cy="0" r="2" fill="#999"/></g>
<g transform="translate(86.200 273.7)"><path d="M0 0H6.500L7.700 2H16V12.600H0z" fill="#999"/><path d="M0 0H6.500L7.700 2H16V3.400H0z" fill="#b4b4b4"/><path d="M0 3H16" stroke="#e8e8e8" stroke-width=".7"/></g>
<g transform="translate(79 304)"><path d="M0 0Q8 -10.600 16 0Q8 10.600 0 0z" fill="#999"/><circle cx="8" cy="0" r="3.400" fill="#f0f0f0"/><circle cx="8" cy="0" r="2" fill="#999"/></g>
<g transform="translate(38.600 322.300)"><path d="M0 11.200H11.200V0z" fill="url(#tg)" stroke="#222" stroke-width=".9" stroke-linejoin="round"/></g>
<g transform="translate(61 328)"><path d="M0 0Q8 -10.600 16 0Q8 10.600 0 0z" fill="#999"/><circle cx="8" cy="0" r="3.400" fill="#f0f0f0"/><circle cx="8" cy="0" r="2" fill="#999"/></g>
<g transform="translate(86.200 321.7)"><path d="M0 0H6.500L7.700 2H16V12.600H0z" fill="#999"/><path d="M0 0H6.500L7.700 2H16V3.400H0z" fill="#b4b4b4"/><path d="M0 3H16" stroke="#e8e8e8" stroke-width=".7"/></g>
<g transform="translate(79 352)"><path d="M0 0Q8 -10.600 16 0Q8 10.600 0 0z" fill="#999"/><circle cx="8" cy="0" r="3.400" fill="#f0f0f0"/><circle cx="8" cy="0" r="2" fill="#999"/></g>
<path d="M82.800 336.200L86.600 333M89 336.200L92.800 333" stroke="#6a8cc0" stroke-width="1.600" fill="none"/>
<g font-family="Liberation Sans,sans-serif" font-size="12" fill="#333"><text x="91.500" y="212.300">Dokumenteinstellungen</text><text x="91.500" y="236.300">Benannte Ansichten</text></g>
<!-- comments -->
<rect x="4.200" y="953.200" width="299.600" height="24.500" fill="#c6c6c6"/><rect x="5.100" y="953.200" width="297.800" height="23.500" fill="#f1f1f1"/>
<text x="29.300" y="969" font-family="Liberation Sans,sans-serif" font-size="11" fill="#555">KOMMENTARE</text>
<circle cx="287.500" cy="965.500" r="5.300" fill="#fafafa"/><circle cx="287.500" cy="965.500" r="4.400" fill="#1a1a1a"/><path d="M285 965.500H290M287.500 963V968" stroke="#fff" stroke-width="1.100"/>
<!-- nav bar -->
<rect x="842.300" y="952.300" width="236" height="23.400" fill="#f1f1f1"/>
<g transform="translate(0 -0.800)">
<g fill="#333"><path d="M865.700 962.800h6l-3 3.800zM976.700 962.800h6l-3 3.800zM1007 962.800h6l-3 3.800zM1038 962.800h6l-3 3.800zM1068.700 962.800h6l-3 3.800z"/></g>
<!-- orbit -->
<g fill="none" stroke="#333" stroke-width="1.100"><path d="M853.300 957.500V971.500M850.800 960L853.300 957.300L855.800 960"/><ellipse cx="853" cy="965.500" rx="7" ry="3.200"/><path d="M847.500 969.500l-1.800-2.800 3.300-.3"/></g>
<!-- look at -->
<g fill="none" stroke="#333" stroke-width="1.100"><rect x="878.500" y="961.500" width="14.500" height="9.500"/><rect x="881.500" y="965" width="8.500" height="3.500" fill="#ccc"/><path d="M880 961l3-3.300M883.500 961l3-3.300M887 961l3-3.300M890.500 961l1.500-2"/></g>
<!-- hand -->
<path d="M907.500 964.500v-4.500a1 1 0 0 1 2 0v-1.500a1 1 0 0 1 2 0v1a1 1 0 0 1 2 0v1.500a1 1 0 0 1 2 0v6.500q0 4-4 4h-1.500q-2.500 0-3.800-2.500l-2.700-4.500q-.5-1.200 .8-1.500q1 0 1.700 1z" fill="#fff" stroke="#333" stroke-width="1"/><path d="M909.500 960v4M911.500 959.500v4.500M913.500 961v3.500" stroke="#333" stroke-width=".8"/>
<!-- zoom -->
<g fill="none" stroke="#333"><circle cx="935.500" cy="964.500" r="4.200" stroke-width="1.300" fill="#e8e8e8"/><path d="M938.500 967.800L942.500 972" stroke-width="2.200"/><path d="M941 959.500h4M943 957.500v4M941 963.500h4" stroke-width=".9"/></g>
<!-- zoom window -->
<g fill="none" stroke="#333"><rect x="956.500" y="957.500" width="12" height="12" stroke-width=".9" stroke-dasharray="2 1.300"/><circle cx="962.500" cy="963.500" r="5" stroke-width="1.300" fill="#e8e8e8"/><path d="M966 967.500L970.500 972.500" stroke-width="2.200"/></g>
<!-- display -->
<g stroke="#333" stroke-width="1.200"><rect x="990" y="957.500" width="14" height="10.500" fill="#fff"/><rect x="992" y="959.500" width="10" height="6.500" fill="#a4c2ea" stroke="none"/><path d="M994 971.500h6M997 968v3.500" fill="none"/></g>
<!-- grid -->
<g fill="none" stroke="#444" stroke-width="1"><rect x="1020.500" y="957.500" width="14" height="14" fill="#e4e6ec"/><path d="M1024 957.500v14M1027.500 957.500v14M1031 957.500v14M1020.500 961h14M1020.500 964.500h14M1020.500 968h14"/></g>
<!-- viewports -->
<g fill="#86a6dc" stroke="#2a4a9a" stroke-width="1.100"><rect x="1051.500" y="958.500" width="5.500" height="5"/><rect x="1059" y="958.500" width="5.500" height="5"/><rect x="1051.500" y="965.500" width="5.500" height="5"/><rect x="1059" y="965.500" width="5.500" height="5"/></g>
</g>

<!-- ebene -->
<text x="1837.300" y="970.300" font-family="Liberation Sans,sans-serif" font-size="12" font-weight="bold" fill="#333" textLength="38.400" lengthAdjust="spacingAndGlyphs">Ebene2</text>
<path d="M1899.600 958.200a7.300 7.300 0 0 1 7.300 7.300v7.300h-7.300a7.300 7.300 0 0 1 0-14.600z" fill="#050505" stroke="#fff" stroke-width="1.600" paint-order="stroke"/><path d="M1894.500 967.500l8.500-5M1895 969.500l9-5.300M1897.500 970.500l6.500-3.800M1899 962.500l4 6.500M1902 961.500l2.500 4" stroke="#ddd" stroke-width=".7"/>
<!-- viewcube -->
<path d="M1818 226L1858 250L1898 226L1890 214L1826 212z" fill="#000" opacity=".28" filter="url(#blur)"/>
<path d="M1822.600 182.800L1855.700 167.900L1891.800 182.800L1856.300 202.300z" fill="#efefef" fill-opacity=".85"/>
<path d="M1822.600 182.800L1856.300 202.300V243.800L1824.800 222z" fill="#e4e4e4" fill-opacity=".85"/>
<path d="M1856.300 202.300L1891.800 182.800L1890.100 223L1856.300 243.800z" fill="#dcdcdc" fill-opacity=".85"/>
<path d="M1822.600 182.800L1855.700 167.900L1891.800 182.800L1890.100 223L1856.300 243.800L1824.800 222zM1822.600 182.800L1856.300 202.300L1891.800 182.800M1856.300 202.300V243.800" fill="none" stroke="#666" stroke-width=".7" stroke-linejoin="round"/>
<path d="M1820 177L1824.800 222" stroke="#4848ee" stroke-width="2"/>
<path d="M1824.800 222L1862.200 250.300" stroke="#f08888" stroke-width="2"/>
<text x="1814.800" y="174.200" font-family="Liberation Sans,sans-serif" font-size="14" fill="#6a6aff">Z</text>
<text x="1863" y="258.800" font-family="Liberation Sans,sans-serif" font-size="14" fill="#ff7474">X</text>
<g font-family="Liberation Sans,sans-serif" font-size="8.800" fill="#8a919e" text-anchor="middle">
<text transform="matrix(.84 .42 -.84 .42 1856.500 186)">OBEN</text>
<text transform="matrix(.82 .5 0 1 1840.500 218)">VORNE</text>
<text transform="matrix(.82 -.48 0 1 1874 217.500)">RECHTS</text>
</g>
</svg>
</div><div class="abs" style="left:94px;top:141px;width:336px;height:475.600px;background:#505050;border-radius:12px"></div>
<div class="tt" style="top:145.5px;letter-spacing:-0.206px">Skizze erstellen</div>
<div class="tt" style="top:169.5px;letter-spacing:-0.124px">Ruft den Skizziermodus auf, in dem Sie geometrische</div>
<div class="tt" style="top:185.5px;letter-spacing:-0.109px">Profile erstellen, die das Fundament einer</div>
<div class="tt" style="top:201.5px;letter-spacing:-0.084px">Konstruktion definieren. Verwenden Sie dann</div>
<div class="tt" style="top:217.5px;letter-spacing:-0.138px">Befehle wie Extrusion, Drehen und Erhebung, um</div>
<div class="tt" style="top:233.5px;letter-spacing:-0.158px">3D-Körper aus Skizzen zu erstellen.</div>
<div class="tt" style="top:265.5px;letter-spacing:-0.179px">Wählen Sie eine Konstruktionsebene aus, und</div>
<div class="tt" style="top:281.5px;letter-spacing:-0.146px">erstellen Sie dann Linien, Bogen oder Punkte, um</div>
<div class="tt" style="top:297.5px;letter-spacing:-0.079px">Skizzen- und Konstruktionsgeometrie zu generieren.</div>
<div class="tt" style="top:313.5px;letter-spacing:-0.176px">Beschränken Sie Skizzen mithilfe von Bemaßungen</div>
<div class="tt" style="top:329.5px;letter-spacing:-0.067px">und Abhängigkeiten. Wählen Sie Skizze fertig stellen</div>
<div class="tt" style="top:345.5px;letter-spacing:-0.161px">aus, um den Skizziermodus zu beenden.</div>
<div class="tt" style="top:597.5px;letter-spacing:0.022px">Drücken Sie Ctrl+/, um weitere Hilfe zu erhalten.</div>
<svg class="ic" style="left:106px;top:385px" width="304" height="188" viewBox="106 385 304 188">
<rect x="106" y="385" width="304" height="188" fill="#fff"/>
<path d="M120.600 385V573M148 385V573M175.400 385V573M202.800 385V573M230.200 385V573M257.600 385V573M312.400 385V573M339.800 385V573M367.200 385V573M394.600 385V573M106 410.200H410M106 437.600H410M106 465H410M106 519.800H410M106 547.200H410" stroke="#efefef" stroke-width="1" fill="none"/>
<path d="M230.600 437.800H340.100V503.500A43.500 43.500 0 0 1 295.600 546.800H230.600z" fill="#edf6fc"/>
<path d="M285 385V573" stroke="#8be08b" stroke-width="1"/><path d="M106 492.400H410" stroke="#f3a3a3" stroke-width="1"/>
<!-- right sketch -->
<path d="M230.600 437.800L340 546.500M340.100 437.800L230.600 546.800" stroke="#333" stroke-width="1" stroke-dasharray="5 3" fill="none"/>
<path d="M295.600 546.800H230.600V437.800H340.100V503.500" fill="none" stroke="#222" stroke-width="1.500"/>
<path d="M340.100 503.500A43.500 43.500 0 0 1 295.600 546.800" fill="none" stroke="#5ab4e8" stroke-width="1.800"/>
<circle cx="285" cy="492.400" r="5.500" fill="none" stroke="#aaa" stroke-width="1.500"/><circle cx="285" cy="492.400" r="3" fill="#111"/>
<path d="M230.600 423.500V437M340.100 423.500V437M234 427.900H337" stroke="#333" stroke-width="1" fill="none"/><path d="M231.200 427.900L239 426.200V429.600zM339.500 427.900L331.700 426.200V429.600z" fill="#222"/>
<text x="283.300" y="423.600" text-anchor="middle" font-family="Liberation Sans,sans-serif" font-size="10.500" fill="#555">100.00</text>
<path d="M344 437.800H391M344 503.500H391M386.600 441V500" stroke="#444" stroke-width="1" fill="none"/><path d="M386.600 438.400L384.900 446.200H388.300zM386.600 502.900L384.900 495.100H388.300z" fill="#222"/>
<text x="0" y="0" transform="translate(379.400 465.600) rotate(-90)" text-anchor="middle" font-family="Liberation Sans,sans-serif" font-size="10.500" fill="#777">(60.00)</text>
<path d="M338 524.700L370.100 540.200H404.300" stroke="#333" stroke-width="1" fill="none"/><path d="M335.800 523.600L342.500 524.200L340.500 528.300z" fill="#222"/>
<text x="387.300" y="536.500" text-anchor="middle" font-family="Liberation Sans,sans-serif" font-size="10.500" fill="#555">R40.00</text>
<g stroke="#a6a6a6" stroke-width="1.700" fill="none"><path d="M246 438H258M246 435.500H258M246 440.500H258"/><path d="M277 442.500H292M277 445.500H292"/><path d="M291 452L300 443M294 454L303 445"/><path d="M333 447L338 441M333 441L338 447"/><path d="M335 478L343 469M337.500 480.500L345.500 471.500"/><path d="M224.500 503L233.500 494M227 506L236 497"/><path d="M224 508.500H237M224 511.500H237"/><path d="M269 552L278 543M271.500 555L280.500 546"/></g>
<g stroke="#555" stroke-width="1.200" fill="none"><path d="M270.500 496V507H279"/><circle cx="270.500" cy="495" r="1.200"/><path d="M324.500 550V563H337"/><circle cx="324.500" cy="549.500" r="1.500"/><circle cx="295.800" cy="503.600" r="2.600" fill="#fff" stroke="#777"/></g>
<!-- left sketch -->
<path d="M108 431Q121.400 414.900 121.400 414.900A77.500 77.500 0 0 1 198.900 492.400" fill="none" stroke="#777" stroke-width="1.400" opacity=".0"/>
<path d="M135 416.100A77.500 77.500 0 0 1 195.500 470" fill="none" stroke="#707070" stroke-width="1.600"/><path d="M121.400 414.900A77.500 77.500 0 0 1 135 416.100" fill="none" stroke="#a8a8a8" stroke-width="1.300"/><path d="M195.500 470A77.500 77.500 0 0 1 198.800 489" fill="none" stroke="#a0a0a0" stroke-width="1.300"/><path d="M198.800 489A77.500 77.500 0 0 1 197.300 508" fill="none" stroke="#dcdcdc" stroke-width="1.200"/>
<path d="M108 416.500Q115 414.900 121.400 414.900" fill="none" stroke="#d8d8d8" stroke-width="1.200"/>
<path d="M121.400 409V492.400" stroke="#14e614" stroke-width="1.800" stroke-dasharray="15 2.500 4 2.500"/>
<path d="M121.400 492.400V573" stroke="#7ddc7d" stroke-width="1" stroke-dasharray="5 3"/>
<path d="M121.400 497V545" stroke="#7cc4f0" stroke-width="1" stroke-dasharray="6 3"/>
<path d="M125.500 492.400H205" stroke="#f01010" stroke-width="2" stroke-dasharray="22 5 9 3"/>
<path d="M121.400 438.100H168M175.600 446V543.700" stroke="#e8a477" stroke-width="1.200" stroke-dasharray="9 3 3 3" fill="none"/>
<rect x="134.200" y="450.400" width="29.500" height="29.500" fill="#4a8fe6" fill-opacity=".85"/>
<path d="M121.400 438.100C140 440 152 455 148.600 465.200C145 478 130 484 121.400 492.400" fill="none" stroke="#a9cf95" stroke-width="1.200"/>
<path d="M121.400 438.100C132 443 150 452 148.600 465.200C147 476 134 482 121.400 492.400" fill="none" stroke="#4a4a4a" stroke-width="1"/>
<path d="M171 443L163.700 450.400" stroke="#888" stroke-width="2"/>
<circle cx="175.600" cy="438.500" r="6.800" fill="#fff" stroke="#666" stroke-width="1.600"/><circle cx="175.600" cy="438.500" r="1.500" fill="#fff" stroke="#888" stroke-width=".8"/>
<path d="M121.400 435.300L124.200 438.100L121.400 440.900L118.600 438.100zM148.600 462.400L151.400 465.200L148.600 468L145.800 465.200z" fill="#444"/>
<path d="M121.400 492.400C112 503 108 525 121.400 546.800" fill="none" stroke="#888" stroke-width="1"/>
<circle cx="121.400" cy="492.400" r="4.500" fill="#ccc" stroke="#888" stroke-width="1"/>
<text transform="translate(138.300 507.800) rotate(90)" text-anchor="middle" font-family="Liberation Sans,sans-serif" font-size="11.500" fill="#8a8a8a">-125</text>
<rect x="180.800" y="485" width="6" height="15.500" rx="1" fill="#f4f4f4" stroke="#999" stroke-width="1"/><path d="M181 489.500H187M181 492.500H187M181 495.500H187" stroke="#999" stroke-width="1"/>
<path d="M124 524.500H129M124.500 527.500H130M125 530.500H131M126.500 532.500L128 535M128.500 532.500L130 535" stroke="#7cc4f0" stroke-width="1" fill="none"/>
<rect x="115.800" y="541.500" width="11.200" height="10.800" fill="none" stroke="#7cc4f0" stroke-width="1.200"/><path d="M114 546.800H130" stroke="#888" stroke-width="1"/>
<circle cx="175.600" cy="546.800" r="2.600" fill="#fff" stroke="#888" stroke-width="1"/>
<circle cx="187.600" cy="558.400" r="7.300" fill="#fff" stroke="#888" stroke-width="1.200"/><path d="M183.800 558.500L186.500 561.300L191.500 555.300" fill="none" stroke="#777" stroke-width="1.400"/>
<path d="M122.800 551.500V563L125.500 560.500L127.500 565L129.300 564.200L127.400 559.800L131 559.500z" fill="#fff" stroke="#222" stroke-width=".9"/>
<path d="M131 570C131 565 134 565.500 135 567C136.500 569 140 568 140 562.500" fill="none" stroke="#222" stroke-width="1.300"/><circle cx="131" cy="570.500" r="1.200" fill="#1e6fe0"/><circle cx="140" cy="562" r="1.200" fill="#1e6fe0"/><circle cx="135.300" cy="567" r="1" fill="#1e6fe0"/>
</svg>
<div id="timeline"></div>
<svg class="ic" style="left:0;top:982px" width="1919" height="50" viewBox="0 982 1919 50">
<g fill="#5a5a5a">
<path d="M10.500 1000.500h1.600v12.500h-1.600zM22.500 1000.500v12.500l-9.500-6.200z"/>
<path d="M45 1001v11.500l-9.500-5.800zM46.300 1004.200h1.600v5h-1.600z"/>
<path d="M61 999.500v14.500l12.200-7.200z"/>
<path d="M88 1001v11.500l9.500-5.800zM85 1004.200h1.600v5h-1.600z"/>
<path d="M111 1000.500v12.500l9.500-6.200zM121 1000.500h1.600v12.500h-1.600z"/>
</g>
<path d="M154.500 1017.500v5.600h72v-5.600M178 1017.500v5.600M202 1017.500v5.600" fill="none" stroke="#c8c8c8" stroke-width="1.800"/>
<circle cx="154" cy="1005.800" r="8" fill="#8cc8f8"/><path d="M146.200 1007.500a8 8 0 0 0 15.600 0q-7.800 2.500-15.600 0z" fill="#6cb0e8"/>
<!-- 2nd -->
<path d="M176 1004.500l3-3h7.500v7.500l-3 3h-7.500z" fill="#cfe3f5" stroke="#555" stroke-width=".9"/><path d="M176 1004.500h7.500v7.500M183.500 1004.500l3-3" fill="none" stroke="#555" stroke-width=".7"/><path d="M171 999l4 4M175 999l-4 4" stroke="#e02020" stroke-width="1.600"/>
<!-- 3rd -->
<rect x="195.500" y="999.500" width="11.500" height="11.500" fill="#fff" stroke="#6aaee6" stroke-width="1" stroke-dasharray="2 1.200"/><path d="M198 1002.500h5M198 1002.500v6" stroke="#888" stroke-width=".8" fill="none"/><path d="M201.500 1012.500l1-3.500 5-5 2.500 2.500-5 5z" fill="#f0a030"/><path d="M207.500 1004l2.500 2.500 1-1-2.500-2.500z" fill="#e05050"/>
<!-- 4th selected -->
<rect x="214" y="994.300" width="23.500" height="23.400" rx="1.500" fill="#1590d5"/>
<path d="M218 1002.500l3.500-4h2.500l-3 4z" fill="#fff"/><path d="M218 1002.500h3v12.500h-3z" fill="#dcdcdc"/><path d="M221.500 1002l4-4.500v12l-4 5.500z" fill="#8cdc9c"/><path d="M228.500 1002l4.500-4.500v12l-4.500 5.500z" fill="#f4b488"/>
<path d="M237.800 993v31" stroke="#555" stroke-width="1.600"/><path d="M231.700 992h12.300v2.500l-6.200 5.500-6.100-5.500z" fill="#5a5a5a"/>
<!-- gear -->
<g transform="translate(1899 1006.700) scale(.79) translate(-1899 -1009.400)"><path d="M1897.600 999.500h2.800l.6 2.200 1.700 .7 2-1.200 2 2-1.200 2 .7 1.700 2.200 .6v2.800l-2.200 .6-.7 1.700 1.200 2-2 2-2-1.200-1.700 .7-.6 2.200h-2.800l-.6-2.200-1.700-.7-2 1.200-2-2 1.200-2-.7-1.700-2.200-.6v-2.800l2.200-.6 .7-1.700-1.200-2 2-2 2 1.200 1.700-.7z M1899 1004a2.900 2.900 0 1 0 .01 0z" fill="#777" fill-rule="evenodd"/></g>
</svg>
<div id="taskbar"></div>
<svg class="ic" style="left:0;top:1032px" width="1919" height="47" viewBox="0 1032 1919 47">
<defs><linearGradient id="wg" x1="0" y1="0" x2="1" y2="1"><stop offset="0" stop-color="#5cc8f8"/><stop offset="1" stop-color="#0a6fd0"/></linearGradient>
<linearGradient id="fg" x1="0" y1="0" x2="0" y2="1"><stop offset="0" stop-color="#ffd75e"/><stop offset="1" stop-color="#f7b928"/></linearGradient></defs>
<!-- weather -->
<defs><linearGradient id="cg" x1="0" y1="0" x2="0" y2="1"><stop offset="0" stop-color="#9db8f0"/><stop offset=".6" stop-color="#d5e0f8"/><stop offset="1" stop-color="#eef2fc"/></linearGradient><linearGradient id="dg" x1="0" y1="0" x2="0" y2="1"><stop offset="0" stop-color="#4a9af8"/><stop offset="1" stop-color="#0a5cf0"/></linearGradient></defs>
<path d="M24.500 1061a5.200 5.200 0 0 1 .6-10.300a6.500 6.500 0 0 1 11.600-1.200a5.800 5.800 0 0 1 1.800 11.500z" fill="url(#cg)"/><path d="M21 1057.500a5 5 0 0 1 4.500-6.800a6.500 6.500 0 0 1 11.200-1.200a5.500 5.500 0 0 1 5.800 6" fill="none" stroke="#aac0f0" stroke-width=".8" opacity=".8"/>
<path d="M32 1056q4.500 2 6.500 6.500a3.600 3.600 0 1 1-6.500 1.500q-.8-4 0-8z" fill="url(#dg)"/>
<!-- windows -->
<path d="M683 1045h11v11h-11zM695.200 1045h11v11h-11zM683 1057.200h11v11h-11zM695.200 1057.200h11v11h-11z" fill="url(#wg)"/>
<!-- search -->
<rect x="720" y="1040.600" width="218.200" height="30.800" rx="15.400" fill="#fbfbfb" stroke="#d8d8d8" stroke-width="1"/>
<circle cx="737.300" cy="1055.300" r="4.800" fill="none" stroke="#222" stroke-width="1.500"/><path d="M740.800 1059l4 4.200" stroke="#222" stroke-width="1.700" stroke-linecap="round"/>
<!-- task view -->
<defs><linearGradient id="tv1" x1="0" y1="0" x2="1" y2="1"><stop offset="0" stop-color="#fdfdfd"/><stop offset="1" stop-color="#e2e2e2"/></linearGradient><linearGradient id="tv2" x1="0" y1="0" x2="1" y2="1"><stop offset="0" stop-color="#d0d0d0"/><stop offset="1" stop-color="#8a8a8a"/></linearGradient></defs><rect x="956.700" y="1044.800" width="18.300" height="15.900" rx="1.500" fill="url(#tv1)"/><rect x="950.800" y="1050.700" width="18.400" height="16.600" rx="1.500" fill="#222"/><path d="M956.700 1050.700h11a1.500 1.500 0 0 1 1.500 1.500v8.500h-12.500z" fill="url(#tv2)"/>
<!-- opera -->
<circle cx="1006.800" cy="1055.700" r="11.300" fill="none" stroke="#f0365c" stroke-width="1.500"/><ellipse cx="1006" cy="1055.700" rx="6.300" ry="10" fill="none" stroke="#f0365c" stroke-width="1.400" transform="rotate(8 1006 1055.700)"/>
<!-- explorer -->
<path d="M1039 1046.500a1.500 1.500 0 0 1 1.500-1.500h6.500l2 2h12.500a1.500 1.500 0 0 1 1.500 1.500v3h-24z" fill="#e8a623"/><rect x="1039" y="1048.500" width="24" height="18" rx="1.500" fill="url(#fg)"/><path d="M1044 1061.500h14v5h-14z" fill="#1a7fd8"/><path d="M1046.500 1059h9l2.500 2.500h-14z" fill="#1565b8"/>
<!-- discord -->
<circle cx="1094.300" cy="1055.800" r="12" fill="#5865f2"/><path d="M1088 1051.500q3-1.800 6.300-1.800t6.300 1.800q2.400 4.500 2.200 8.700q-2 1.700-4.300 2l-.9-1.600q-3.300 1-6.600 0l-.9 1.600q-2.300-.3-4.300-2q-.2-4.200 2.200-8.700z" fill="#fff"/><ellipse cx="1091.800" cy="1057" rx="1.500" ry="1.800" fill="#5865f2"/><ellipse cx="1096.800" cy="1057" rx="1.500" ry="1.800" fill="#5865f2"/>
<!-- spotify -->
<circle cx="1138.300" cy="1055.800" r="11.500" fill="#1ed760"/><g fill="none" stroke="#111" stroke-linecap="round"><path d="M1131.500 1052q7-2 14 1" stroke-width="2.200"/><path d="M1132.300 1056q6-1.600 11.800 .9" stroke-width="1.800"/><path d="M1133 1059.800q5-1.200 9.800 .8" stroke-width="1.500"/></g>
<!-- minecraft -->
<rect x="1170.700" y="1044" width="24" height="24" fill="#4ea338"/><rect x="1170.700" y="1044" width="24" height="24" fill="none" stroke="#3e8a2a" stroke-width="1"/><path d="M1175 1049.500h5.500v5.500h-5.500zM1185 1049.500h5.500v5.500h-5.500zM1180.500 1055h4.500v2.500h2.500v8h-2.500v-2.500h-4.500v2.500h-2.500v-8h2.500z" fill="#111"/>
<!-- fusion -->
<rect x="1207.700" y="1036.700" width="38" height="36.600" rx="4" fill="#fbfbfb" stroke="#e6e6e6" stroke-width=".8"/>
<path d="M1230 1045l6.300 1a2 2 0 0 1 2 2v18a2 2 0 0 1-2 2h-7z" fill="#c85a14"/><path d="M1215.800 1046a2 2 0 0 1 2-2h12.700a2 2 0 0 1 2 2v16h-16.700z" fill="#ff7a1a"/><path d="M1215.800 1061.500h22.500v4.700a2 2 0 0 1-2 2h-18.500a2 2 0 0 1-2-2z" fill="#96380a"/>
<rect x="1219.300" y="1072" width="15.700" height="3" rx="1.500" fill="#1a7fd8"/>
<g fill="#8a8a8a"><rect x="1003.700" y="1072.300" width="6" height="2.600" rx="1.300"/><rect x="1047.700" y="1072.300" width="6" height="2.600" rx="1.300"/><rect x="1091.300" y="1072.300" width="6" height="2.600" rx="1.300"/><rect x="1135.300" y="1072.300" width="6" height="2.600" rx="1.300"/></g>
<!-- tray -->
<path d="M1734.500 1058.500l5-5 5 5" fill="none" stroke="#222" stroke-width="1.500"/>
<g fill="none" stroke="#222" stroke-width="1.200"><path d="M1774 1048.500h-9.500a1 1 0 0 0-1 1v9.500a1 1 0 0 0 1 1h8M1767 1063.500h6M1770 1060v3.500"/><rect x="1774.500" y="1050.500" width="3.800" height="10" rx="1" fill="#eee"/><path d="M1775.500 1053h2"/></g>
<g fill="none" stroke="#222" stroke-width="1.200"><path d="M1787.800 1054.500h2.500l3.500-3v9.800l-3.500-3h-2.500z"/><path d="M1796 1053.500q1.500 2.500 0 5M1798.300 1052q2.500 4 0 8" /><path d="M1800.700 1050.500q3.400 5.500 0 11" stroke="#aaa"/></g>
<path d="M1813 1050.500h11.500a1.500 1.500 0 0 1 1.500 1.500v1.500h1.500v4.500h-1.500v1.500a1.500 1.500 0 0 1-1.500 1.500h-11.500a1.500 1.500 0 0 1-1.500-1.500v-7.500a1.500 1.500 0 0 1 1.500-1.500z" fill="#222"/><path d="M1813.500 1047l-2 5h2.500l-1.500 4" fill="none" stroke="#222" stroke-width="1.400"/><path d="M1815 1051.500l-1.800 3.500h2l-1.200 3" fill="none" stroke="#eee" stroke-width=".9"/>
</svg>
<div class="abs" style="left:1220.500px;top:1046px;font-size:13px;font-weight:bold;color:#fff;line-height:12px">F</div>
<div class="abs" style="left:1221.700px;top:1062.300px;font-size:5px;font-weight:bold;color:#f9c9a0;line-height:6px;letter-spacing:.2px">FUS</div>
<div class="abs" style="left:50px;top:1041px;font-size:12px;line-height:14px;color:#111;white-space:nowrap;letter-spacing:-0.5px">10°C</div>
<div class="abs" style="left:50px;top:1057.400px;font-size:12px;line-height:14px;color:#444;white-space:nowrap;letter-spacing:-0.12px">Leichter Regen</div>
<div class="abs" style="left:756px;top:1049px;font-size:13px;line-height:16px;color:#555;white-space:nowrap">Suche</div>
<div class="abs" style="left:1800px;width:101.500px;text-align:right;top:1041px;font-size:12px;line-height:14px;color:#222;white-space:nowrap">20:04</div>
<div class="abs" style="left:1800px;width:101.500px;text-align:right;top:1057.400px;font-size:12px;line-height:14px;color:#222;white-space:nowrap">02.11.2025</div>
</body></html>
